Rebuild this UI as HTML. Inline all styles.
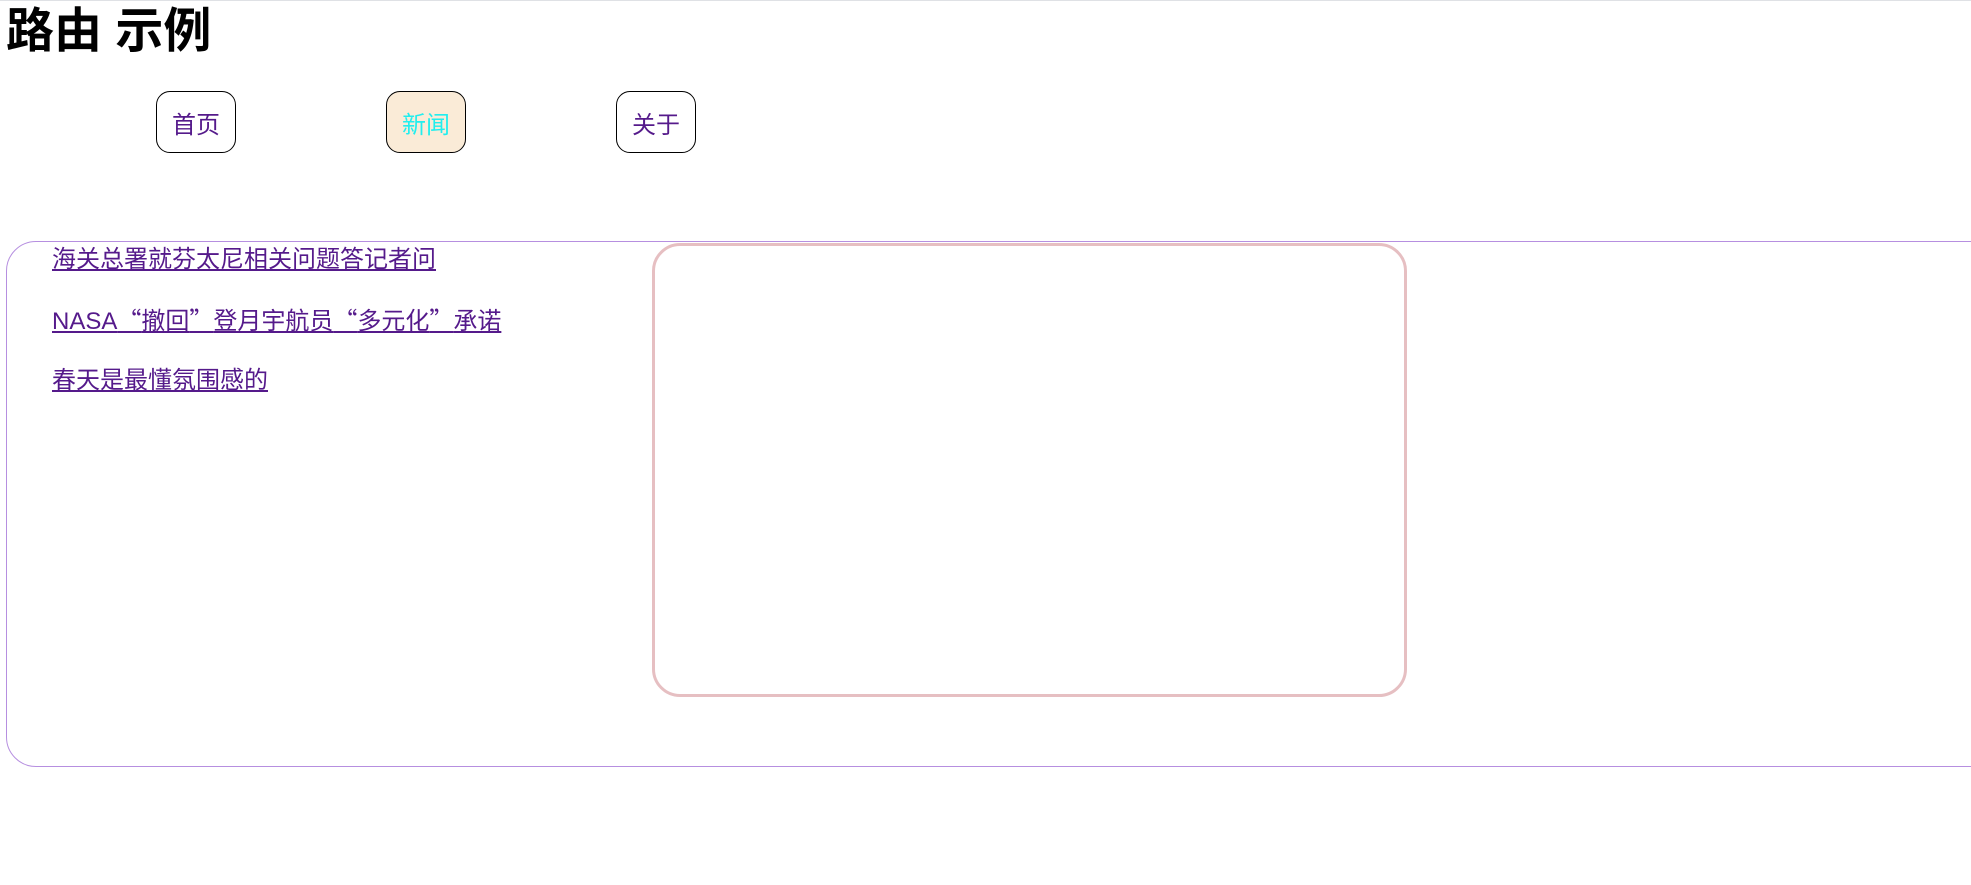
<!DOCTYPE html>
<html><head><meta charset="utf-8"><style>
html,body{margin:0;padding:0;background:#fff;width:1971px;height:885px;overflow:hidden;position:relative;font-family:"Liberation Sans","Noto Sans CJK SC",sans-serif}
.top{position:absolute;left:0;top:0;width:1971px;height:1px;background:#dfe1e5}
h1{position:absolute;left:6px;top:2px;margin:0;font-size:48px;font-weight:bold;line-height:60px;color:#000;white-space:nowrap}
.btn{position:absolute;top:91px;width:78px;height:60px;border:1px solid #000;border-radius:14px;box-sizing:content-box;font-size:24px;line-height:68px;text-align:center;color:#551a8b}
.act{background:#faebd7;color:#22eeee}
.outer{position:absolute;left:6px;top:241px;width:2100px;height:524px;border:1px solid #b68fe0;border-radius:30px}
.pink{position:absolute;left:652px;top:243px;width:749px;height:448px;border:3px solid #e6bfc2;border-radius:28px}
a{position:absolute;left:52px;font-size:24px;color:#551a8b;text-decoration:underline;white-space:nowrap;line-height:34px}
.q{font-family:"Noto Sans CJK SC",sans-serif;line-height:0}
</style></head><body>
<div class="top"></div>
<h1>路由 示例</h1>
<div class="btn" style="left:156px">首页</div>
<div class="btn act" style="left:386px">新闻</div>
<div class="btn" style="left:616px">关于</div>
<div class="outer"></div>
<div class="pink"></div>
<a style="top:243px">海关总署就芬太尼相关问题答记者问</a>
<a style="top:305px">NASA<span class="q">“</span>撤回<span class="q">”</span>登月宇航员<span class="q">“</span>多元化<span class="q">”</span>承诺</a>
<a style="top:364px">春天是最懂氛围感的</a>
</body></html>
